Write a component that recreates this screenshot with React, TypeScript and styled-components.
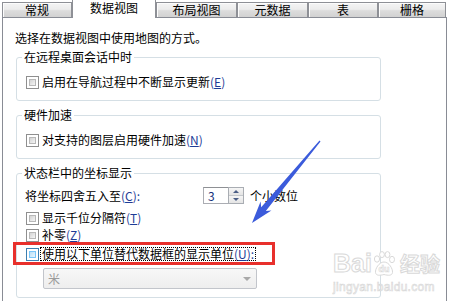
import React from 'react'
import styled, { createGlobalStyle } from 'styled-components'

const GlobalStyle = createGlobalStyle`
  html, body {
    margin: 0;
    padding: 0;
    background: #fff;
  }
  body {
    font-family: 'Noto Sans CJK SC', 'Noto Sans', sans-serif;
    font-size: 12px;
    color: #000;
  }
`

const Window = styled.div`
  position: relative;
  width: 450px;
  height: 301px;
  overflow: hidden;
  background: #fff;
`

const TabStrip = styled.div`
  display: flex;
  align-items: flex-end;
  height: 17px;
  padding-left: 2px;
`

const Tab = styled.div<{ $active?: boolean; $width: number }>`
  box-sizing: border-box;
  width: ${p => p.$width}px;
  text-align: center;
  white-space: nowrap;
  border: 1px solid #8e9096;
  border-bottom: none;
  ${p =>
    p.$active
      ? `
    position: relative;
    z-index: 2;
    height: 18px;
    margin-bottom: -1px;
    line-height: 16px;
    background: #fff;
    border-top: none;
  `
      : `
    height: 15px;
    line-height: 13px;
    background: linear-gradient(#f4f4f4, #ececec 45%, #dcdcdc 55%, #d2d2d2);
    box-shadow: inset 1px 1px 0 #fcfcfc;
  `}
`

const Panel = styled.div`
  box-sizing: border-box;
  width: 445px;
  height: 284px;
  margin-left: 2px;
  border: 1px solid #898c95;
  border-bottom: none;
  padding-left: 13px;
`

const Intro = styled.div`
  margin: 13px 0 0 -1px;
  line-height: 14px;
`

const Group = styled.fieldset<{ $top: number; $padTop: number; $padBottom: number }>`
  box-sizing: border-box;
  width: 365px;
  min-width: 0;
  margin: ${p => p.$top}px 0 0 0;
  padding: ${p => p.$padTop}px 9px ${p => p.$padBottom}px 9px;
  border: 1px solid #d5dfe5;
  border-radius: 3px;
`

const Legend = styled.legend`
  margin-left: -4px;
  padding: 0 2px;
  line-height: 14px;
`

const Row = styled.div<{ $gap?: number }>`
  display: flex;
  align-items: center;
  height: 14px;
  margin-top: ${p => p.$gap ?? 0}px;
  white-space: nowrap;
`

const Box = styled.span<{ $hover?: boolean }>`
  box-sizing: border-box;
  flex: none;
  width: 13px;
  height: 13px;
  margin-right: 1px;
  border: 1px solid ${p => (p.$hover ? '#3c7fb1' : '#8f8f8f')};
  padding: 2px;
  background: #fff;
  &::after {
    content: '';
    display: block;
    width: 100%;
    height: 100%;
    box-sizing: border-box;
    border: 1px solid ${p => (p.$hover ? '#79c6f9' : '#b8b8b8')};
    background: ${p =>
      p.$hover
        ? 'linear-gradient(135deg, #b9def6, #e9f6fe)'
        : 'linear-gradient(135deg, #d3d3d3, #f5f5f5)'};
  }
`

const Label = styled.span<{ $focus?: boolean }>`
  line-height: 12px;
  padding: 0 1px;
  border: 1px ${p => (p.$focus ? 'dotted #000' : 'solid transparent')};
`

const Key = styled.span`
  color: #1e3c96;
`

const Under = styled.span`
  text-decoration: underline;
`

const Highlight = styled.div`
  box-sizing: border-box;
  width: 262px;
  margin-left: -13px;
  padding: 2px 0 1px 10px;
  border: 3px solid #e8302c;
`

const SpinRow = styled.div`
  display: flex;
  align-items: center;
  height: 17px;
  white-space: nowrap;
`

const SpinLabel = styled.span`
  width: 178px;
  margin-left: -1px;
`

const Spinner = styled.div`
  display: flex;
  height: 17px;
  margin-right: 6px;
`

const SpinText = styled.div`
  box-sizing: border-box;
  width: 25px;
  height: 17px;
  padding-left: 4px;
  line-height: 15px;
  color: #16307a;
  border: 1px solid #abadb3;
  border-top-color: #8e9094;
  border-right: none;
`

const SpinButtons = styled.div`
  display: flex;
  flex-direction: column;
  width: 16px;
  border: 1px solid #a9adb3;
  box-sizing: border-box;
`

const SpinButton = styled.div<{ $down?: boolean }>`
  flex: 1;
  display: flex;
  align-items: center;
  justify-content: center;
  background: linear-gradient(#f6f6f6, #e4e4e4);
  border-top: ${p => (p.$down ? '1px solid #c4c8cc' : 'none')};
  &::after {
    content: '';
    border-left: 3px solid transparent;
    border-right: 3px solid transparent;
    ${p => (p.$down ? 'border-top' : 'border-bottom')}: 3px solid #4b5e86;
  }
`

const Combo = styled.div`
  box-sizing: border-box;
  display: flex;
  align-items: center;
  justify-content: space-between;
  width: 214px;
  height: 21px;
  margin: 3px 0 0 17px;
  padding: 0 5px 0 4px;
  border: 1px solid #c2c5cb;
  border-radius: 2px;
  background: linear-gradient(#f7f7f7, #eeeeee);
  color: #9c9c9c;
  &::after {
    content: '';
    border-left: 4px solid transparent;
    border-right: 4px solid transparent;
    border-top: 4px solid #a8a8a8;
  }
`

const Overlay = styled.svg`
  position: absolute;
  left: 0;
  top: 0;
  pointer-events: none;
`

const Watermark = styled.div`
  position: absolute;
  left: 333px;
  top: 250px;
  display: flex;
  flex-direction: column;
  pointer-events: none;
`

const MarkTop = styled.div`
  display: flex;
  align-items: center;
  height: 27px;
`

const MarkWord = styled.span<{ $size: number }>`
  font-family: 'Liberation Sans', Arial, sans-serif;
  font-weight: bold;
  font-size: ${p => p.$size}px;
  line-height: 1;
  color: #fff;
  -webkit-text-stroke: 1px #d9d9d9;
`

const MarkCjk = styled(MarkWord)`
  font-family: 'Noto Sans CJK SC', sans-serif;
  margin-left: 4px;
`

const MarkUrl = styled.span`
  font-family: 'Liberation Sans', Arial, sans-serif;
  font-size: 12px;
  color: #fff;
  -webkit-text-stroke: 0.6px #d6d6d6;
  margin-top: 3px;
  letter-spacing: 0.3px;
`

const Paw = () => (
  <svg width='24' height='26' viewBox='0 0 24 26'>
    <g fill='#fff' stroke='#d9d9d9' strokeWidth='1'>
      <ellipse cx='5' cy='8' rx='2.6' ry='3.2' />
      <ellipse cx='10' cy='3.6' rx='2.4' ry='3' />
      <ellipse cx='15.5' cy='3.6' rx='2.4' ry='3' />
      <ellipse cx='20' cy='8.5' rx='2.5' ry='3.2' />
      <path d='M12 11 C7 11 3 18 3.5 21.5 C4 25 8 24.5 12 23.5 C16 24.5 20 25 20.5 21.5 C21 18 17 11 12 11 Z' />
    </g>
    <text x='12' y='21' textAnchor='middle' fontFamily='Liberation Sans, sans-serif' fontWeight='bold' fontSize='9' fill='#fff' stroke='#d9d9d9' strokeWidth='0.6'>
      du
    </text>
  </svg>
)

const Arrow = () => (
  <Overlay width='450' height='301'>
    <polygon
      points='252,223 271.4,210.5 265.8,211 320.5,141.4 319.5,140.6 261.2,207.2 260.6,201.6'
      fill='#3b5bdb'
    />
  </Overlay>
)

const tabs = [
  { label: '常规', width: 70 },
  { label: '数据视图', width: 84, active: true },
  { label: '布局视图', width: 81 },
  { label: '元数据', width: 71 },
  { label: '表', width: 70 },
  { label: '栅格', width: 68 }
]

const Check: React.FC<{
  text: string
  mnemonic: string
  hover?: boolean
  focus?: boolean
  gap?: number
}> = ({ text, mnemonic, hover, focus, gap }) => (
  <Row $gap={gap}>
    <Box $hover={hover} />
    <Label $focus={focus}>
      {text}
      <Key>
        (<Under>{mnemonic}</Under>){focus ? ':' : ''}
      </Key>
    </Label>
  </Row>
)

export default function App() {
  return (
    <Window>
      <GlobalStyle />
      <TabStrip>
        {tabs.map(t => (
          <Tab key={t.label} $active={t.active} $width={t.width}>
            {t.label}
          </Tab>
        ))}
      </TabStrip>
      <Panel>
        <Intro>选择在数据视图中使用地图的方式。</Intro>
        <Group $top={5} $padTop={11} $padBottom={11}>
          <Legend>在远程桌面会话中时</Legend>
          <Check text='启用在导航过程中不断显示更新' mnemonic='E' />
        </Group>
        <Group $top={7} $padTop={11} $padBottom={11}>
          <Legend>硬件加速</Legend>
          <Check text='对支持的图层启用硬件加速' mnemonic='N' />
        </Group>
        <Group $top={7} $padTop={7} $padBottom={8}>
          <Legend>状态栏中的坐标显示</Legend>
          <SpinRow>
            <SpinLabel>
              将坐标四舍五入至
              <Key>
                (<Under>C</Under>):
              </Key>
            </SpinLabel>
            <Spinner>
              <SpinText>3</SpinText>
              <SpinButtons>
                <SpinButton />
                <SpinButton $down />
              </SpinButtons>
            </Spinner>
            <span>个小数位</span>
          </SpinRow>
          <Check text='显示千位分隔符' mnemonic='T' gap={7} />
          <Check text='补零' mnemonic='Z' gap={3} />
          <Highlight>
            <Check text='使用以下单位替代数据框的显示单位' mnemonic='U' hover focus />
          </Highlight>
          <Combo>米</Combo>
        </Group>
      </Panel>
      <Arrow />
      <Watermark>
        <MarkTop>
          <MarkWord $size={25}>Bai</MarkWord>
          <Paw />
          <MarkCjk $size={20}>经验</MarkCjk>
        </MarkTop>
        <MarkUrl>jingyan.baidu.com</MarkUrl>
      </Watermark>
    </Window>
  )
}
